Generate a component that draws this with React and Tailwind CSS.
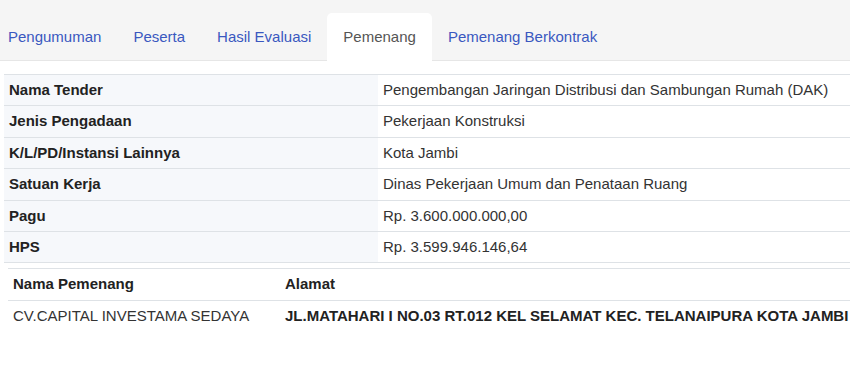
import React from "react";

const tabs = ["Pengumuman", "Peserta", "Hasil Evaluasi", "Pemenang", "Pemenang Berkontrak"];

const rows = [
  ["Nama Tender", "Pengembangan Jaringan Distribusi dan Sambungan Rumah (DAK)"],
  ["Jenis Pengadaan", "Pekerjaan Konstruksi"],
  ["K/L/PD/Instansi Lainnya", "Kota Jambi"],
  ["Satuan Kerja", "Dinas Pekerjaan Umum dan Penataan Ruang"],
  ["Pagu", "Rp. 3.600.000.000,00"],
  ["HPS", "Rp. 3.599.946.146,64"],
];

const App = () => (
  <div className="w-[850px] h-[365px] bg-white overflow-hidden text-[15px] text-[#222]" style={{ fontFamily: '"Liberation Sans", Arial, sans-serif' }}>
    {/* tabs */}
    <div className="h-[61px] bg-[#f5f5f5] border-b border-[#e6e6e6] flex items-end">
      {tabs.map((t, i) => {
        const active = t === "Pemenang";
        return (
          <div
            key={t}
            className={
              (i === 0 ? "pl-2 pr-4 " : "px-4 ") +
              "h-[48px] leading-[48px] -mb-px rounded-t-[5px] " +
              (active ? "bg-white text-[#555]" : "text-[#3a58c0]")
            }
          >
            {t}
          </div>
        );
      })}
    </div>

    {/* detail table */}
    <div className="mt-[13px] ml-1 border-t border-[#dee2e6]">
      {rows.map(([k, v]) => (
        <div key={k} className="flex border-b border-[#dee2e6]">
          <div className="w-[374px] shrink-0 bg-[#f6f8fb] px-[5px] py-[5px] leading-[20.4px] font-bold">{k}</div>
          <div className="flex-1 px-[5px] py-[5px] leading-[20.4px] text-[#333]">{v}</div>
        </div>
      ))}
    </div>

    {/* winner table */}
    <div className="mt-[5px] ml-2 border-t border-[#dee2e6]">
      <div className="flex border-b border-[#dee2e6] font-bold">
        <div className="w-[277px] shrink-0 px-[5px] py-[5px] leading-[20.4px]">Nama Pemenang</div>
        <div className="flex-1 px-0 py-[5px] leading-[20.4px]">Alamat</div>
      </div>
      <div className="flex">
        <div className="w-[277px] shrink-0 px-[5px] py-[5px] leading-[20.4px] text-[#333]">CV.CAPITAL INVESTAMA SEDAYA</div>
        <div className="flex-1 py-[5px] leading-[20.4px] font-bold whitespace-nowrap">JL.MATAHARI I NO.03 RT.012 KEL SELAMAT KEC. TELANAIPURA KOTA JAMBI</div>
      </div>
    </div>
  </div>
);

export default App;
